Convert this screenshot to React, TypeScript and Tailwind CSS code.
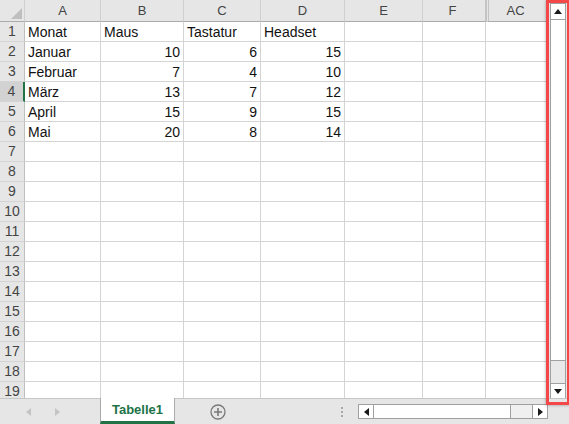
import React from "react";

const COLUMNS = ["A", "B", "C", "D", "E", "F", "AC"];

const DATA: (string | number)[][] = [
  ["Monat", "Maus", "Tastatur", "Headset"],
  ["Januar", 10, 6, 15],
  ["Februar", 7, 4, 10],
  ["März", 13, 7, 12],
  ["April", 15, 9, 15],
  ["Mai", 20, 8, 14],
];

const ROW_COUNT = 19;

function TriUp() {
  return (
    <svg width="8" height="5" viewBox="0 0 8 5">
      <path d="M0 5 L4 0 L8 5 Z" fill="#1a1a1a" />
    </svg>
  );
}

function TriDown() {
  return (
    <svg width="8" height="5" viewBox="0 0 8 5">
      <path d="M0 0 L8 0 L4 5 Z" fill="#1a1a1a" />
    </svg>
  );
}

function TriSide({ dir, color }: { dir: "left" | "right"; color: string }) {
  return (
    <svg width="5" height="8" viewBox="0 0 5 8">
      {dir === "left" ? (
        <path d="M5 0 L0 4 L5 8 Z" fill={color} />
      ) : (
        <path d="M0 0 L5 4 L0 8 Z" fill={color} />
      )}
    </svg>
  );
}

function HeaderRow() {
  return (
    <>
      {/* corner */}
      <div className="relative h-[22px] bg-[#e6e6e6] border-r border-b border-r-[#d0d0d0] border-b-[#ababab]">
        <svg className="absolute left-0 top-0" width="25" height="22" viewBox="0 0 25 22">
          <path d="M11 19 L22 19 L22 8 Z" fill="#bfbfbf" />
        </svg>
      </div>
      {COLUMNS.map((c) => (
        <div
          key={c}
          className={`h-[22px] flex items-center justify-center bg-[#e6e6e6] border-b border-b-[#ababab] text-[13px] text-[#444] ${
            c === "F"
              ? "border-r border-r-[#c4c4c4] pr-[3px]"
              : c === "AC"
              ? "border-double border-l-[3px] border-l-[#c4c4c4] border-r border-r-[#d0d0d0] pr-[4px]"
              : "border-r border-r-[#d0d0d0]"
          }`}
        >
          {c}
        </div>
      ))}
    </>
  );
}

function SheetRow({ n }: { n: number }) {
  const values = DATA[n - 1] ?? [];
  const selected = n === 4;

  return (
    <>
      <div
        className={`h-[20px] flex items-center justify-center border-b border-b-[#d4d4d4] text-[14px] text-[#444] ${
          selected
            ? "bg-[#d2d2d2] border-r-2 border-r-[#217346]"
            : "bg-[#e6e6e6] border-r border-r-[#bfbfbf]"
        }`}
      >
        {n}
      </div>
      {COLUMNS.map((c, i) => {
        const v = values[i];
        const isNum = typeof v === "number";
        return (
          <div
            key={c}
            className={`h-[20px] leading-[20px] border-r border-b border-[#d4d4d4] text-[14px] text-[#111] overflow-hidden whitespace-nowrap ${
              isNum ? "text-right pr-[3px]" : "pl-[3px]"
            }`}
          >
            {v ?? ""}
          </div>
        );
      })}
    </>
  );
}

function VerticalScrollbar() {
  return (
    <div className="w-[22px] h-full bg-[#e6e6e6] pt-[3px] pl-[3px]">
      <div className="w-[16px] h-[396px] flex flex-col border border-[#a0a0a0] bg-[#e9e9e9]">
        <div className="h-[16px] flex items-center justify-center bg-white border-b border-[#a0a0a0]">
          <TriUp />
        </div>
        <div className="h-[341px] bg-white border-b border-[#a0a0a0]" />
        <div className="flex-1" />
        <div className="h-[15px] flex items-center justify-center bg-white border-t border-[#a0a0a0]">
          <TriDown />
        </div>
      </div>
    </div>
  );
}

function SheetBar() {
  return (
    <div className="h-[26px] flex items-stretch bg-[#e6e6e6] border-t border-[#c6c6c6]">
      <div className="w-[100px] flex items-center gap-[24px] pl-[26px]">
        <TriSide dir="left" color="#c4c4c4" />
        <TriSide dir="right" color="#c4c4c4" />
      </div>
      <div className="w-[75px] -mt-px bg-white border-x border-[#ababab] border-b-[3px] border-b-[#217346] flex items-center justify-center text-[13px] font-bold text-[#217346]">
        Tabelle1
      </div>
      <div className="pl-[35px] flex items-center">
        <svg width="16" height="16" viewBox="0 0 16 16">
          <circle cx="8" cy="8" r="7" fill="none" stroke="#7a7a7a" strokeWidth="1.3" />
          <path d="M8 4 V12 M4 8 H12" stroke="#7a7a7a" strokeWidth="1.6" />
        </svg>
      </div>
      <div className="flex-1" />
      <div className="flex flex-col justify-center gap-[2px]">
        <div className="w-[2px] h-[2px] bg-[#a8a8a8]" />
        <div className="w-[2px] h-[2px] bg-[#a8a8a8]" />
        <div className="w-[2px] h-[2px] bg-[#a8a8a8]" />
      </div>
      <div className="w-[15px]" />
      <div className="w-[190px] flex items-center">
        <div className="w-full h-[15px] flex border border-[#a0a0a0] bg-[#f0f0f0]">
          <div className="w-[15px] flex items-center justify-center bg-white border-r border-[#a0a0a0]">
            <TriSide dir="left" color="#1a1a1a" />
          </div>
          <div className="w-[137px] bg-white border-r border-[#a0a0a0]" />
          <div className="flex-1" />
          <div className="w-[15px] flex items-center justify-center bg-white border-l border-[#a0a0a0]">
            <TriSide dir="right" color="#1a1a1a" />
          </div>
        </div>
      </div>
      <div className="w-[21px]" />
    </div>
  );
}

export default function App() {
  const rows = Array.from({ length: ROW_COUNT }, (_, i) => i + 1);

  return (
    <div
      className="relative w-[569px] h-[424px] overflow-hidden bg-white flex flex-col"
      style={{ fontFamily: '"Liberation Sans", Arial, sans-serif' }}
    >
      <div className="h-[398px] flex overflow-hidden">
        <div className="w-[547px] h-full overflow-hidden">
          <div className="grid grid-cols-[25px_76px_83px_77px_84px_78px_63px_61px]">
            <HeaderRow />
            {rows.map((n) => (
              <SheetRow key={n} n={n} />
            ))}
          </div>
        </div>
        <VerticalScrollbar />
      </div>
      <SheetBar />

      {/* red highlight around the vertical scrollbar */}
      <div className="absolute left-[546px] top-0 w-[24px] h-[405px] border-[3px] border-[#f44848] shadow-[0_0_3px_rgba(0,0,0,0.35)]" />
    </div>
  );
}
